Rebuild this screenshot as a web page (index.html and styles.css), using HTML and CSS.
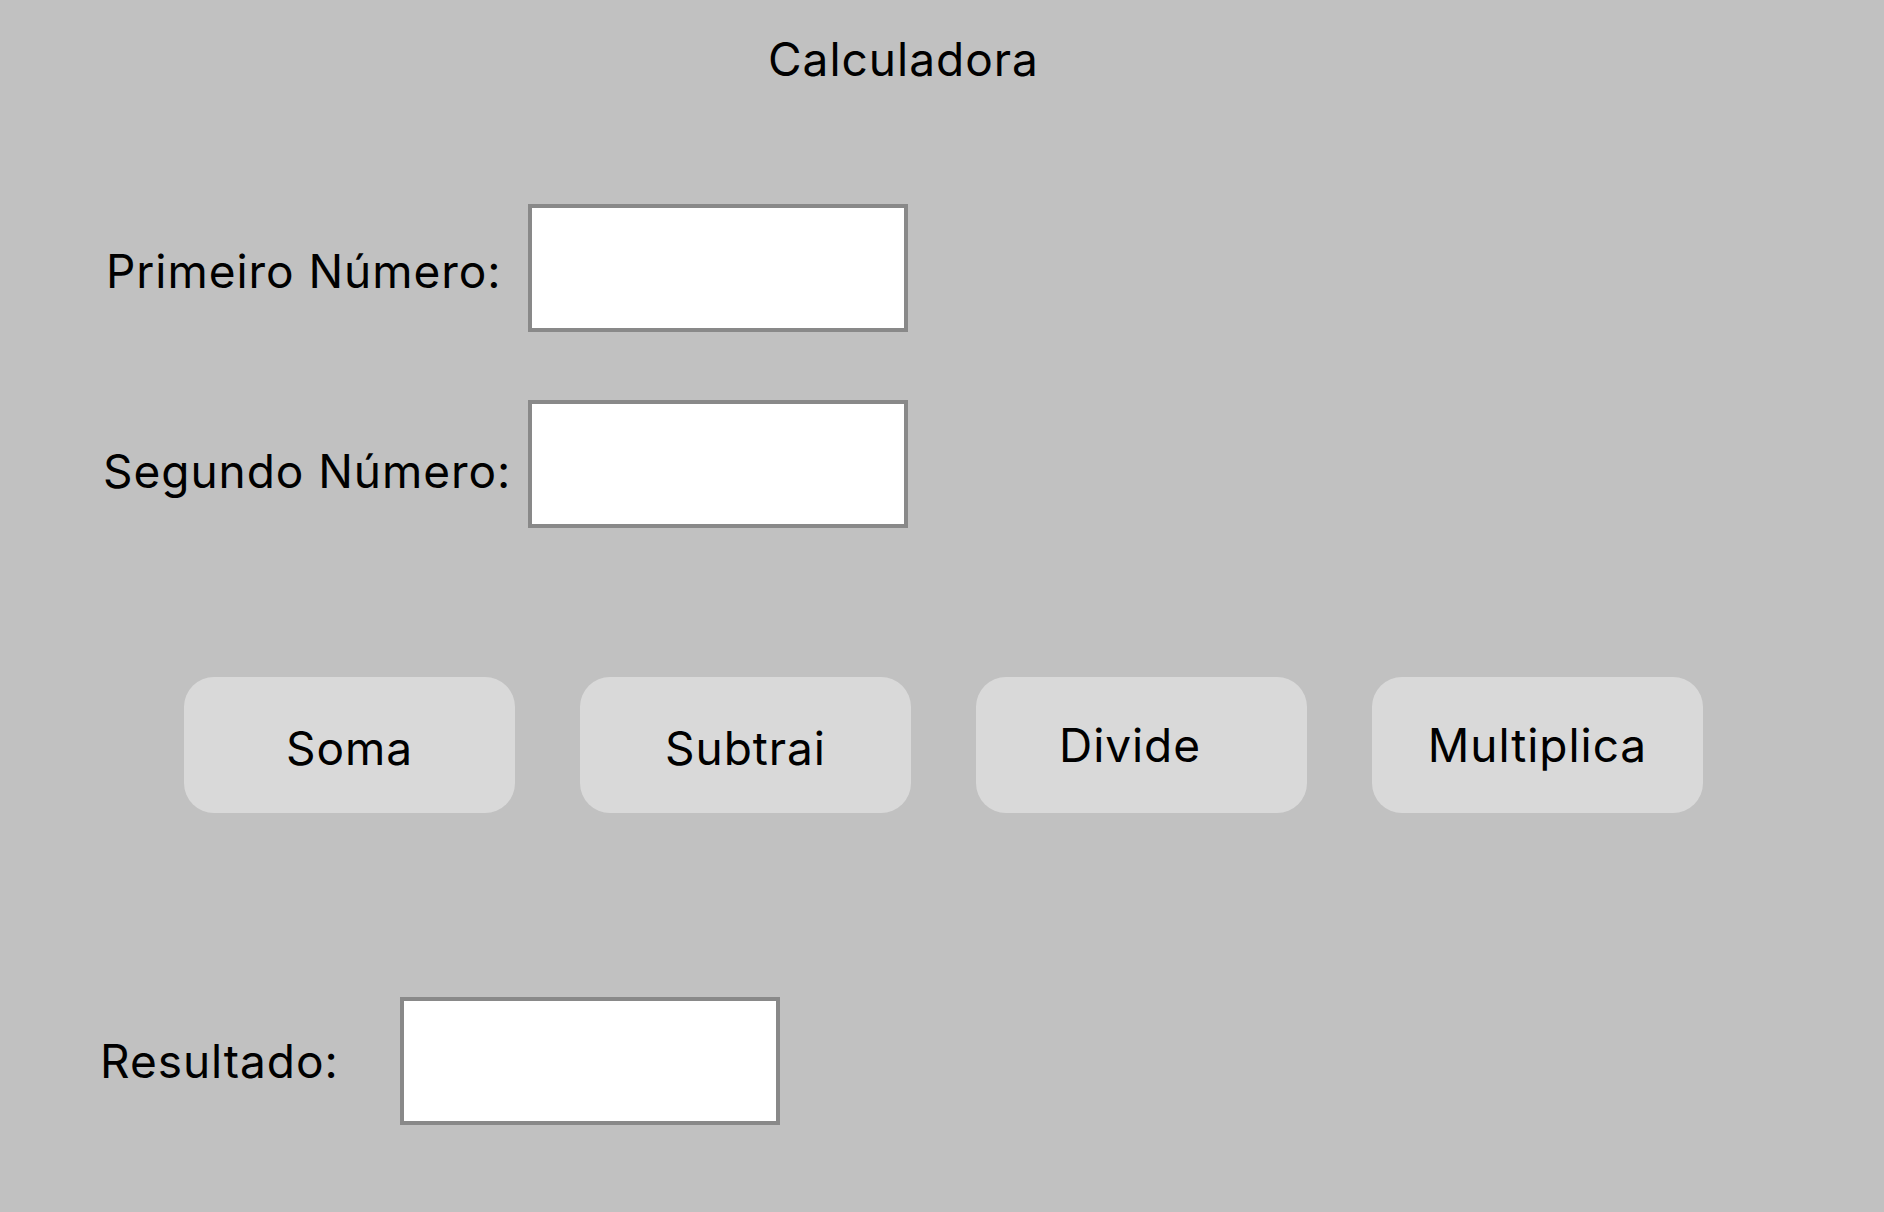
FILE: index.html
```html
<!DOCTYPE html>
<html lang="pt">
<head>
<meta charset="utf-8">
<title>Calculadora</title>
<link rel="stylesheet" href="styles.css">
</head>
<body>
<main class="calc">
  <h1 class="title">Calculadora</h1>
  <div class="field field-first">
    <label class="label label-first" for="n1">Primeiro Número:</label>
    <input class="box" id="n1" type="text">
  </div>
  <div class="field field-second">
    <label class="label label-second" for="n2">Segundo Número:</label>
    <input class="box" id="n2" type="text">
  </div>
  <div class="actions">
    <button class="btn btn-low" type="button">Soma</button>
    <button class="btn btn-low" type="button">Subtrai</button>
    <button class="btn btn-left" type="button">Divide</button>
    <button class="btn" type="button">Multiplica</button>
  </div>
  <div class="field field-result">
    <label class="label label-result" for="res">Resultado:</label>
    <input class="box" id="res" type="text" readonly>
  </div>
</main>
</body>
</html>
```
FILE: styles.css
```css
html, body {
  margin: 0;
  padding: 0;
}
body {
  background: #c1c1c1;
  width: 1884px;
  height: 1212px;
  overflow: hidden;
  font-family: Inter, "Noto Sans", sans-serif;
  color: #000;
}
.calc {
  display: flex;
  flex-direction: column;
  align-items: flex-start;
}
.title {
  margin: 0;
  padding: 31px 0 0 768px;
  font-size: 46px;
  font-weight: 400;
  line-height: 56px;
  letter-spacing: 1px;
}
.field {
  display: flex;
  align-items: flex-start;
}
.field-first {
  margin-top: 117px;
  padding-left: 106px;
}
.field-second {
  margin-top: 68px;
  padding-left: 103px;
}
.field-result {
  margin-top: 184px;
  padding-left: 100px;
}
.label {
  font-size: 46px;
  line-height: 56px;
  letter-spacing: 0.95px;
  white-space: nowrap;
}
.label-first {
  width: 422px;
  margin-top: 39px;
}
.label-second {
  width: 425px;
  margin-top: 43px;
}
.label-result {
  width: 300px;
  margin-top: 36px;
}
.box {
  box-sizing: border-box;
  width: 380px;
  height: 128px;
  margin: 0;
  padding: 0 16px;
  border: 4px solid #898989;
  border-radius: 0;
  background: #fff;
  font: 400 46px Inter, sans-serif;
  outline: none;
}
.actions {
  display: flex;
  gap: 65px;
  margin-top: 149px;
  padding-left: 184px;
}
.btn {
  box-sizing: border-box;
  width: 331px;
  height: 136px;
  margin: 0;
  padding: 0;
  border: 0;
  border-radius: 30px;
  background: #d9d9d9;
  color: #000;
  font: 400 46px Inter, sans-serif;
  line-height: 56px;
  letter-spacing: 0.95px;
  display: flex;
  align-items: center;
  justify-content: center;
}
.btn-low {
  padding-top: 5px;
}
.btn-left {
  padding-right: 23px;
}
```
